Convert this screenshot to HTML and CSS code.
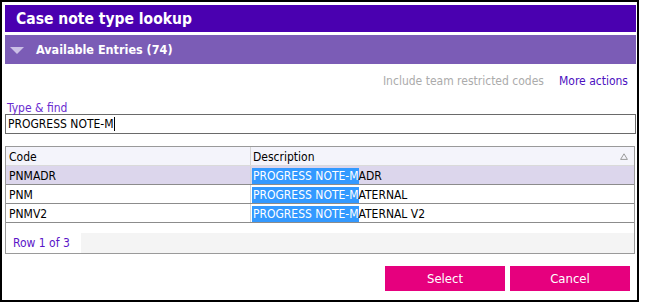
FILE: index.html
```html
<!DOCTYPE html>
<html lang="en">

<head>
    <meta charset="UTF-8">
    <title>Case note type lookup</title>
    <link rel="stylesheet" href="styles.css">
</head>

<body>

<div class="dialog">
    <div class="title">Case note type lookup</div>

    <div class="section">
        <span class="caret"></span>
        Available Entries (74)
    </div>

    <div class="actions">
        <span class="muted">Include team restricted codes</span>
        <a class="link" href="#">More actions</a>
    </div>

    <label class="find-label" for="find">Type &amp; find</label>
    <div class="find-input" id="find">PROGRESS NOTE-M<span class="cursor"></span></div>

    <div class="grid">
        <table>
            <thead>
                <tr>
                    <th class="col-code">Code</th>
                    <th class="col-desc">Description
                        <svg class="sort" width="8" height="7" viewBox="0 0 8 7">
                            <path d="M4 0.8 L7.4 6.4 L0.6 6.4 Z" fill="none" stroke="#9a9a9a" stroke-width="1"/>
                        </svg>
                    </th>
                </tr>
            </thead>
            <tbody>
                <tr class="selected">
                    <td>PNMADR</td>
                    <td><span class="hit">PROGRESS NOTE-M</span>ADR</td>
                </tr>
                <tr>
                    <td>PNM</td>
                    <td><span class="hit">PROGRESS NOTE-M</span>ATERNAL</td>
                </tr>
                <tr>
                    <td>PNMV2</td>
                    <td><span class="hit">PROGRESS NOTE-M</span>ATERNAL V2</td>
                </tr>
            </tbody>
        </table>
        <div class="grid-footer">
            <span class="count">Row 1 of 3</span>
            <span class="band"></span>
        </div>
    </div>

    <div class="buttons">
        <button type="button" class="btn">Select</button>
        <button type="button" class="btn">Cancel</button>
    </div>
</div>

</body>
</html>
```

FILE: styles.css
```css
body {
    margin: 0;
    font-family: "DejaVu Sans Condensed", "Liberation Sans", sans-serif;
    font-size: 12px;
    color: #000;
    background: #fff;
}

.dialog {
    box-sizing: border-box;
    width: 639px;
    height: 302px;
    border: 2px solid #000;
    padding: 3px 1px 0 3px;
}

.title {
    height: 27px;
    line-height: 28px;
    background: #4a00b0;
    color: #fff;
    font-weight: bold;
    font-size: 15.5px;
    padding-left: 11px;
}

.section {
    display: flex;
    align-items: center;
    height: 29px;
    margin-top: 3px;
    background: #7b5cb6;
    color: #fff;
    font-weight: bold;
    font-size: 12.5px;
}

.caret {
    width: 0;
    height: 0;
    margin: 1px 12px 0 5px;
    border-left: 7px solid transparent;
    border-right: 7px solid transparent;
    border-top: 7px solid #cbbfe6;
}

.actions {
    display: flex;
    justify-content: flex-end;
    gap: 15px;
    height: 16px;
    line-height: 16px;
    margin-top: 9px;
    padding-right: 8px;
}

.muted {
    color: #ababab;
}

.link {
    color: #4c10c0;
    text-decoration: none;
}

.find-label {
    display: block;
    line-height: 14px;
    margin-top: 12px;
    padding-left: 2px;
    color: #6a2cd0;
}

.find-input {
    box-sizing: border-box;
    height: 20px;
    margin-top: -1px;
    line-height: 18px;
    border: 1px solid #6a6a6a;
    padding-left: 2px;
}

.cursor {
    display: inline-block;
    width: 1px;
    height: 14px;
    background: #000;
    vertical-align: -3px;
}

.grid {
    margin: 12px 1px 0 0;
    border: 1px solid #9a9a9a;
}

table {
    width: 100%;
    border-collapse: collapse;
}

th, td {
    height: 17px;
    padding: 1px 0 0 3px;
    text-align: left;
    font-weight: normal;
    white-space: nowrap;
}

th {
    background: #f4f4fb;
    border-bottom: 1px solid #dadada;
}

td {
    border-bottom: 1px solid #8c8c8c;
}

.col-code {
    width: 241px;
}

th + th, td + td {
    border-left: 1px solid #d4d4d4;
    padding-left: 1px;
}

.col-desc {
    position: relative;
    padding-left: 2px;
}

.sort {
    position: absolute;
    right: 6px;
    top: 6px;
}

.selected td {
    background: #dcd6ec;
}

.hit {
    display: inline-block;
    line-height: 16px;
    padding-left: 1px;
    background: #3399ff;
    color: #fff;
}

.grid-footer {
    display: flex;
    height: 20px;
    margin-top: 10px;
}

.count {
    width: 68px;
    padding-left: 7px;
    line-height: 20px;
    color: #5a14c8;
}

.band {
    flex: 1;
    background: #f4f4f4;
}

.buttons {
    display: flex;
    justify-content: flex-end;
    gap: 5px;
    margin-top: 12px;
    padding-right: 6px;
}

.btn {
    width: 120px;
    height: 25px;
    border: none;
    background: #e6007e;
    color: #fff;
    font-family: inherit;
    font-size: 13px;
    cursor: pointer;
}
```
